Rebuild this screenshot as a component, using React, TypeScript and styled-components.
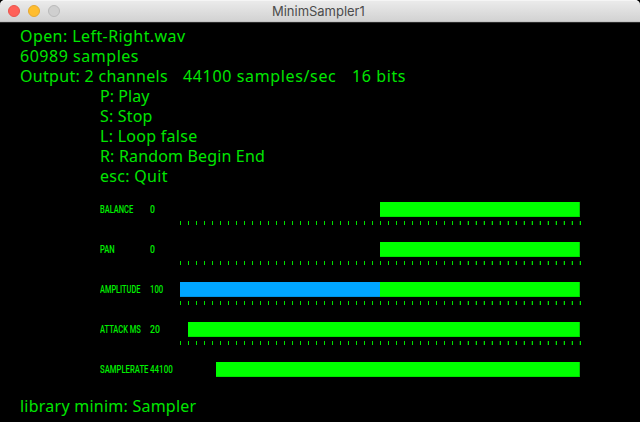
import React from 'react';
import styled, { createGlobalStyle, css } from 'styled-components';

const GlobalStyle = createGlobalStyle`
  * { box-sizing: border-box; }
  body { margin: 0; background: #000; overflow: hidden; }
`;

const Window = styled.main`
  width: 640px;
  height: 422px;
  background: #000;
  overflow: hidden;
`;

const TitleBar = styled.header`
  display: grid;
  grid-template-columns: 264px 1fr;
  align-items: center;
  height: 23px;
  padding-left: 8px;
  border-bottom: 1px solid #2c2c2c;
  border-radius: 5px 5px 0 0;
  background: linear-gradient(#ececec, #d1d1d1);
  box-shadow: inset 0 1px 0 #f5f5f5, inset 0 -1px 0 #c4c4c4;
`;

const Lights = styled.div`
  display: flex;
  gap: 8px;
`;

const Light = styled.span<{ $fill: string; $edge: string }>`
  width: 12px;
  height: 12px;
  border-radius: 50%;
  background: ${(p) => p.$fill};
  border: 1px solid ${(p) => p.$edge};
`;

const Title = styled.h1`
  margin: 0;
  font: 400 13px/20px Inter, sans-serif;
  letter-spacing: -0.02px;
  color: #4c4c4c;
`;

const Canvas = styled.section`
  padding: 3px 0 0 20px;
  color: #00e600;
  font: 16px/20px 'Noto Sans', sans-serif;
`;

const Line = styled.div<{ $indent?: boolean }>`
  display: flex;
  height: 20px;
  white-space: pre;
  padding-left: ${(p) => (p.$indent ? 80 : 0)}px;
`;

const Text = styled.span<{ $tracking: number; $width?: number }>`
  letter-spacing: ${(p) => p.$tracking}px;
  ${(p) => p.$width && css`width: ${p.$width}px;`}
`;

const Sliders = styled.div`
  padding: 10px 0 0 80px;
`;

const SliderRow = styled.div`
  display: grid;
  grid-template-columns: 50px 30px 401px;
  height: 40px;
`;

const Caption = styled.span<{ $stretch: number }>`
  height: 12px;
  margin-top: 8px;
  font: 500 10px/12px Roboto, sans-serif;
  white-space: pre;
  color: #00f000;
  transform: scaleX(${(p) => p.$stretch});
  transform-origin: 0 0;
`;

const Track = styled.div`
  padding-top: 6px;
`;

const Bar = styled.div<{ $start: number }>`
  display: flex;
  width: 400px;
  height: 15px;
  padding-left: ${(p) => p.$start}px;
`;

const Segment = styled.div<{ $blue?: boolean }>`
  flex: 1;
  background: ${(p) => (p.$blue ? '#00a5ff' : '#00ff00')};
  box-shadow: inset 0 -1px 0 ${(p) => (p.$blue ? '#0093e4' : '#00e000')};
  &:last-child {
    border-right: 1px solid #00c800;
  }
`;

const Ticks = styled.div`
  display: flex;
  justify-content: space-between;
  margin-top: 4px;
`;

const Tick = styled.i<{ $soft: boolean }>`
  width: 1px;
  height: 4px;
  background: #00e000;
  ${(p) => p.$soft && css`box-shadow: -1px 0 0 #003c00;`}
`;

const hotkeys: [string, number][] = [
  ['P: Play', 0.06],
  ['S: Stop', 0.18],
  ['L: Loop false', 0.28],
  ['R: Random Begin End', 0.16],
  ['esc: Quit', 0.3],
];

interface Slider {
  label: string;
  labelStretch: number;
  value: string;
  valueStretch: number;
  start: number;
  split?: boolean;
  ticks: boolean;
}

const sliders: Slider[] = [
  { label: 'BALANCE', labelStretch: 0.75, value: '0', valueStretch: 0.86, start: 200, ticks: true },
  { label: 'PAN', labelStretch: 0.76, value: '0', valueStretch: 0.86, start: 200, ticks: true },
  { label: 'AMPLITUDE', labelStretch: 0.74, value: '100', valueStretch: 0.77, start: 0, split: true, ticks: true },
  { label: 'ATTACK MS', labelStretch: 0.75, value: '20', valueStretch: 0.87, start: 8, ticks: true },
  { label: 'SAMPLERATE', labelStretch: 0.77, value: '44100', valueStretch: 0.8, start: 36.4, ticks: false },
];

export default function App() {
  return (
    <Window>
      <GlobalStyle />
      <TitleBar>
        <Lights>
          <Light $fill="#ff6159" $edge="#e9554e" />
          <Light $fill="#ffbd2e" $edge="#e6a831" />
          <Light $fill="#cfcfcf" $edge="#bababa" />
        </Lights>
        <Title>MinimSampler1</Title>
      </TitleBar>
      <Canvas>
        <Line><Text $tracking={0.42}>Open: Left-Right.wav</Text></Line>
        <Line><Text $tracking={0.53}>60989 samples</Text></Line>
        <Line>
          <Text $tracking={0.3} $width={163}>Output: 2 channels</Text>
          <Text $tracking={0.64} $width={169}>44100 samples/sec</Text>
          <Text $tracking={0.6}>16 bits</Text>
        </Line>
        {hotkeys.map(([text, tracking]) => (
          <Line key={text} $indent><Text $tracking={tracking}>{text}</Text></Line>
        ))}
        <Sliders>
          {sliders.map((s) => (
            <SliderRow key={s.label}>
              <Caption $stretch={s.labelStretch}>{s.label}</Caption>
              <Caption $stretch={s.valueStretch}>{s.value}</Caption>
              <Track>
                <Bar $start={s.start}>
                  {s.split && <Segment $blue />}
                  <Segment />
                </Bar>
                {s.ticks && (
                  <Ticks>
                    {Array.from({ length: 51 }, (_, i) => <Tick key={i} $soft={i > 34} />)}
                  </Ticks>
                )}
              </Track>
            </SliderRow>
          ))}
        </Sliders>
        <Line><Text $tracking={0.24}>library minim: Sampler</Text></Line>
      </Canvas>
    </Window>
  );
}
